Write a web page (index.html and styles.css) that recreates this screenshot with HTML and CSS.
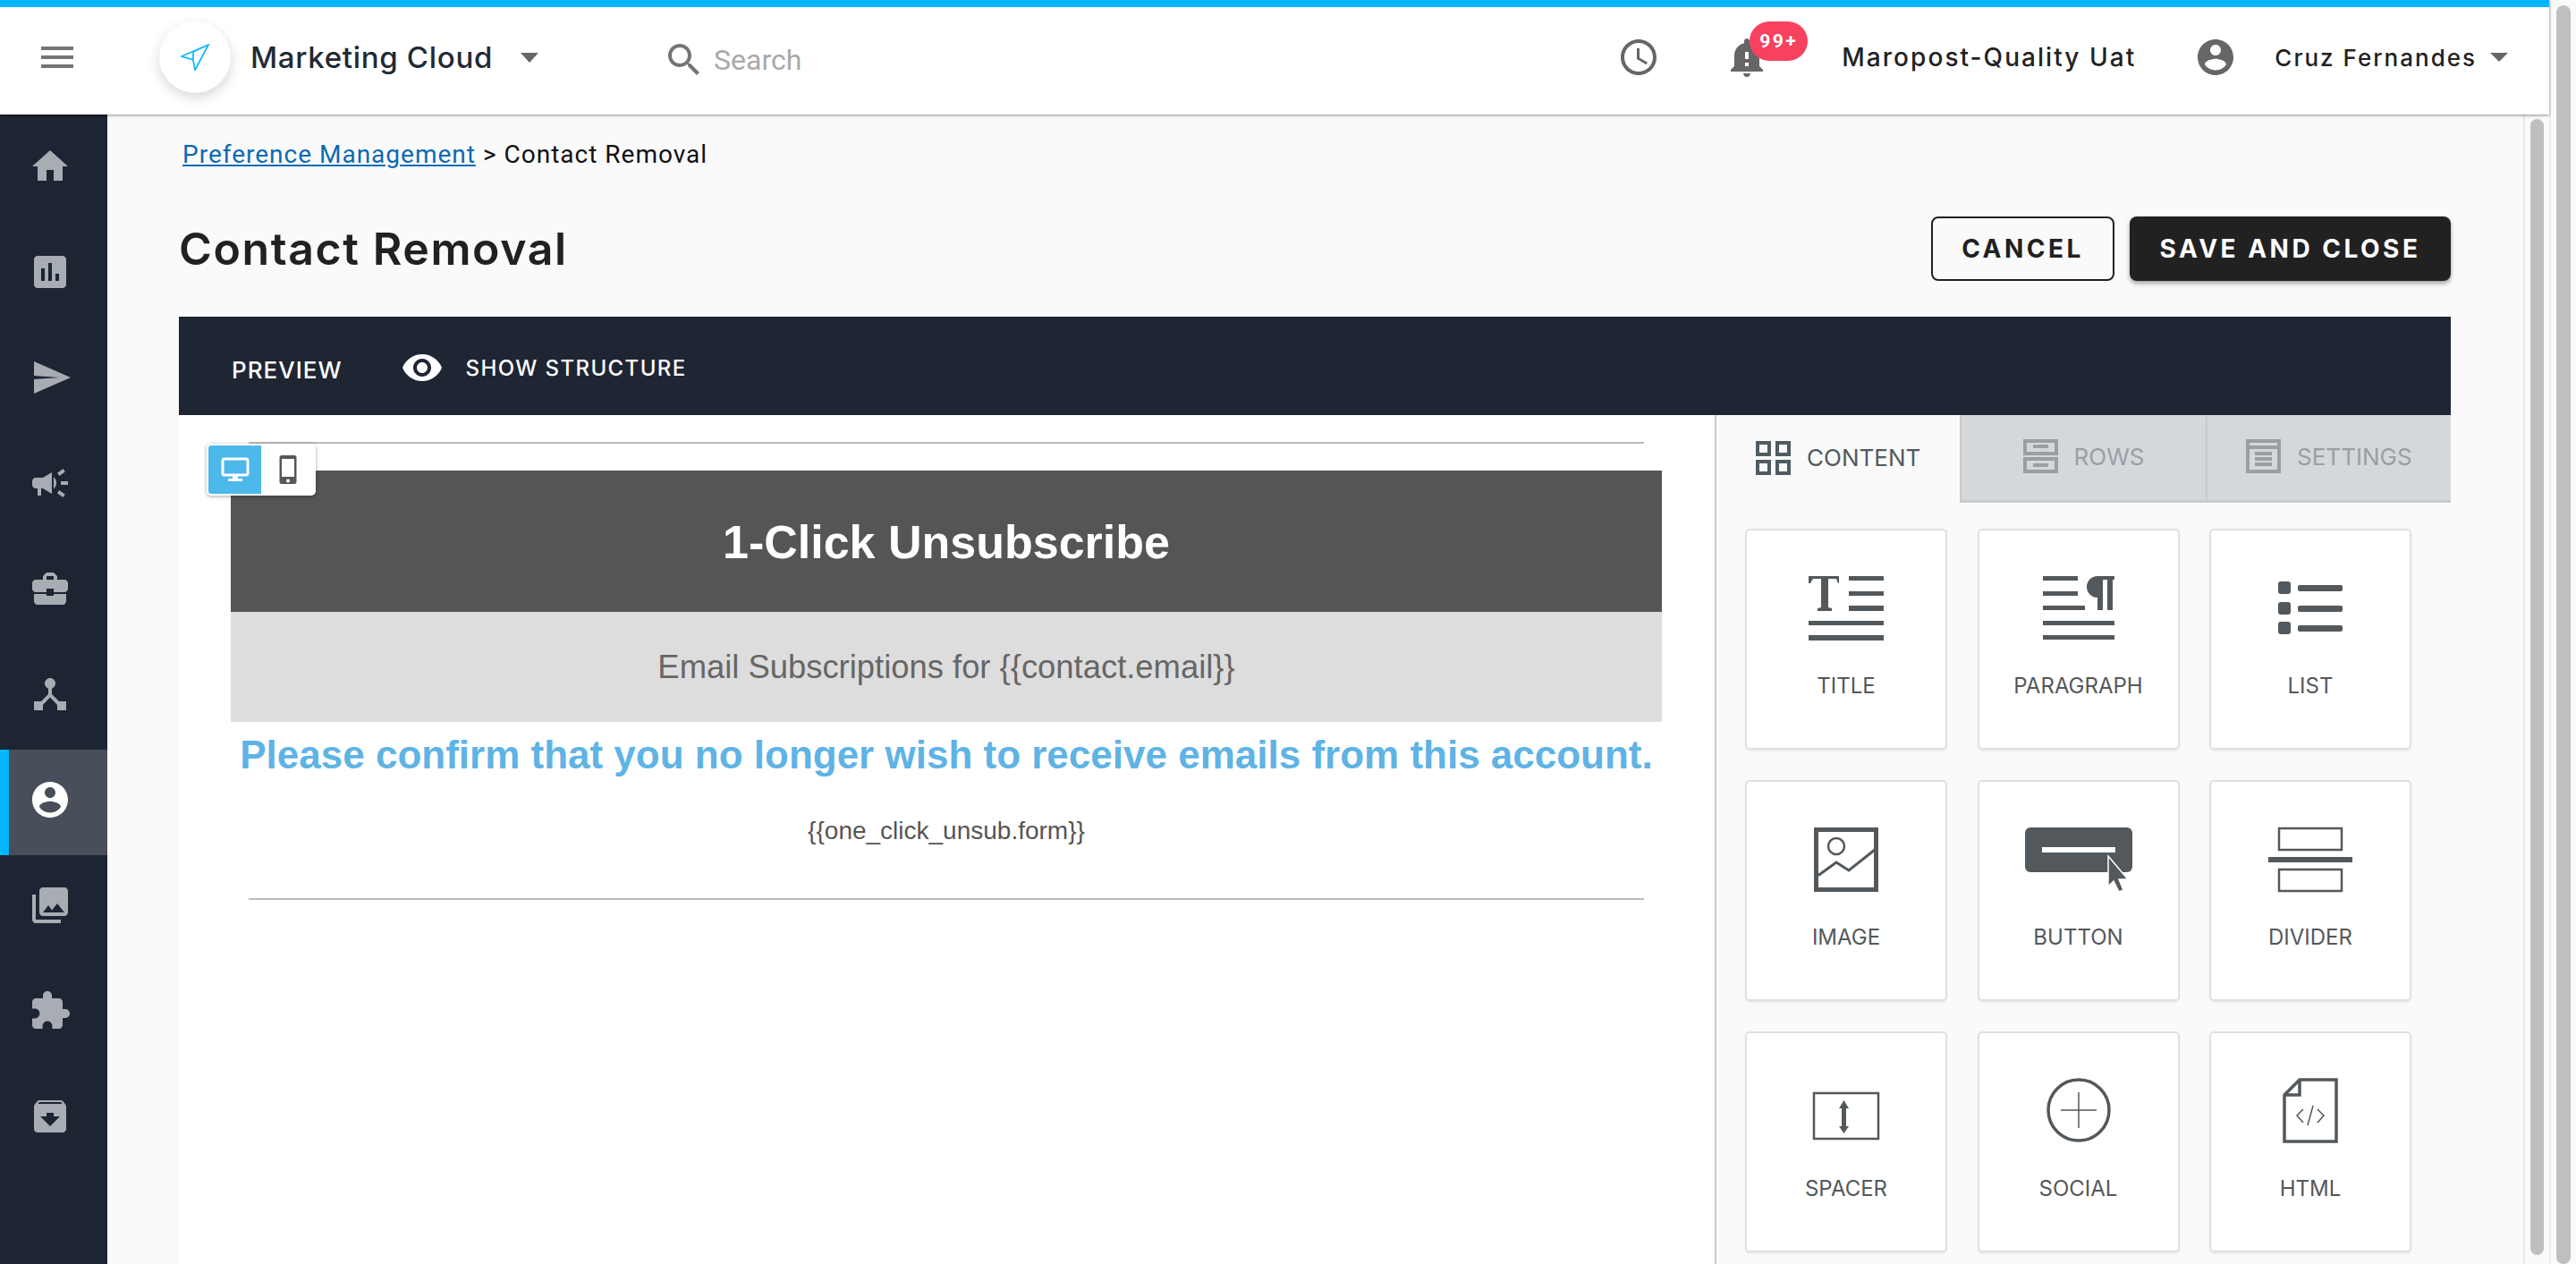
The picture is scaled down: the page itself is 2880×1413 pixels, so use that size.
FILE: index.html
```html
<!DOCTYPE html>
<html lang="en">
<head>
    <meta charset="UTF-8">
    <meta name="viewport" content="width=device-width, initial-scale=1.0">
    <title>Contact Removal</title>
    <link rel="stylesheet" href="styles.css">
</head>
<body>
<div class="app">
    <div class="main">
        <header class="topbar">
            <svg class="menu-icon" viewBox="0 0 24 24"><path d="M3 18h18v-2H3v2zm0-5h18v-2H3v2zm0-7v2h18V6H3z"/></svg>
            <div class="logo">
                <svg viewBox="0 0 32 30"><path d="M31 1 1 14l13 4 2 11.500zM31 1 14 9v9"/></svg>
            </div>
            <span class="brand">Marketing Cloud</span>
            <span class="caret brand-caret"></span>
            <svg class="search-icon" viewBox="0 0 24 24"><path d="M15.5 14h-.79l-.28-.27C15.41 12.59 16 11.11 16 9.5 16 5.91 13.09 3 9.5 3S3 5.91 3 9.5 5.91 16 9.5 16c1.61 0 3.09-.59 4.23-1.57l.27.28v.79l5 4.99L20.49 19l-4.99-5zm-6 0C7.01 14 5 11.99 5 9.5S7.01 5 9.5 5 14 7.01 14 9.5 11.99 14 9.5 14z"/></svg>
            <span class="search-text">Search</span>
            <div class="top-right">
                <svg class="top-icon" viewBox="0 0 24 24"><path d="M11.99 2C6.47 2 2 6.48 2 12s4.47 10 9.99 10C17.52 22 22 17.52 22 12S17.52 2 11.99 2zM12 20c-4.42 0-8-3.58-8-8s3.58-8 8-8 8 3.58 8 8-3.58 8-8 8zm.5-13H11v6l5.25 3.15.75-1.23-4.5-2.67z"/></svg>
                <div class="bell">
                    <svg class="top-icon" viewBox="0 0 24 24"><path d="M12 23c1.1 0 1.99-.89 1.99-1.99h-3.98c0 1.1.89 1.99 1.99 1.99zm7-6v-6c0-3.35-2.36-6.15-5.5-6.83V3c0-.83-.67-1.5-1.5-1.5s-1.5.67-1.5 1.5v1.17C7.36 4.85 5 7.65 5 11v6l-2 2v1h18v-1l-2-2zm-6 .01h-2v-2h2v2zm0-4h-2v-4h2v4z"/></svg>
                    <span class="badge">99+</span>
                </div>
                <span class="account-name">Maropost-Quality Uat</span>
                <svg class="top-icon user-icon" viewBox="0 0 24 24"><path d="M12 2C6.48 2 2 6.48 2 12s4.48 10 10 10 10-4.48 10-10S17.52 2 12 2zm0 3c1.66 0 3 1.34 3 3s-1.34 3-3 3-3-1.34-3-3 1.34-3 3-3zm0 14.2c-2.5 0-4.71-1.28-6-3.22.03-1.99 4-3.08 6-3.08 1.99 0 5.97 1.09 6 3.08-1.29 1.94-3.5 3.22-6 3.22z"/></svg>
                <span class="user-name">Cruz Fernandes</span>
                <span class="caret user-caret"></span>
            </div>
        </header>

        <div class="body">
            <nav class="sidebar">
                <a class="nav-item"><svg viewBox="0 0 24 24"><path d="M10 20v-6h4v6h5v-8h3L12 3 2 12h3v8z"/></svg></a>
                <a class="nav-item"><svg viewBox="0 0 24 24"><path d="M19 3H5c-1.1 0-2 .9-2 2v14c0 1.1.9 2 2 2h14c1.1 0 2-.9 2-2V5c0-1.1-.9-2-2-2zM9 17H7v-7h2v7zm4 0h-2V7h2v10zm4 0h-2v-4h2v4z"/></svg></a>
                <a class="nav-item"><svg viewBox="0 0 24 24"><path d="M3 3l20.5 9L3 21v-8l14-1-14-1z"/></svg></a>
                <a class="nav-item"><svg viewBox="0 0 24 24"><path d="M18 11v2h4v-2h-4zm-2 6.61c.96.71 2.21 1.65 3.2 2.39.4-.53.8-1.07 1.2-1.6-.99-.74-2.24-1.68-3.2-2.4-.4.54-.8 1.08-1.2 1.61zM20.4 5.6c-.4-.53-.8-1.07-1.2-1.6-.99.74-2.24 1.68-3.2 2.4.4.53.8 1.07 1.2 1.6.96-.72 2.21-1.65 3.2-2.4zM4 9c-1.1 0-2 .9-2 2v2c0 1.1.9 2 2 2h1v4h2v-4h1l5 3V6L8 9H4zm11.5 3c0-1.33-.58-2.53-1.5-3.35v6.69c.92-.81 1.5-2.01 1.5-3.34z"/></svg></a>
                <a class="nav-item"><svg viewBox="0 0 24 24"><path d="M10 16v-1H3.01L3 19c0 1.11.89 2 2 2h14c1.11 0 2-.89 2-2v-4h-7v1h-4zm10-9h-4.01V5l-2-2h-4l-2 2v2H4c-1.1 0-2 .9-2 2v3c0 1.11.89 2 2 2h6v-2h4v2h6c1.1 0 2-.9 2-2V9c0-1.1-.9-2-2-2zm-6 0h-4V5h4v2z"/></svg></a>
                <a class="nav-item"><svg viewBox="0 0 24 24"><path d="M17 16l-4-4V8.82C14.16 8.4 15 7.3 15 6c0-1.66-1.34-3-3-3S9 4.34 9 6c0 1.3.84 2.4 2 2.82V12l-4 4H3v5h5v-3.05l4-4.2 4 4.2V21h5v-5h-4z"/></svg></a>
                <a class="nav-item active"><svg viewBox="0 0 24 24"><path d="M12 2C6.48 2 2 6.48 2 12s4.48 10 10 10 10-4.48 10-10S17.52 2 12 2zm0 3c1.66 0 3 1.34 3 3s-1.34 3-3 3-3-1.34-3-3 1.34-3 3-3zm0 14.2c-2.5 0-4.71-1.28-6-3.22.03-1.99 4-3.08 6-3.08 1.99 0 5.97 1.09 6 3.08-1.29 1.94-3.5 3.22-6 3.22z"/></svg></a>
                <a class="nav-item"><svg viewBox="0 0 24 24"><path d="M22 16V4c0-1.1-.9-2-2-2H8c-1.1 0-2 .9-2 2v12c0 1.1.9 2 2 2h12c1.1 0 2-.9 2-2zm-11-4l2.03 2.71L16 11l4 5H8l3-4zM2 6v14c0 1.1.9 2 2 2h14v-2H4V6H2z"/></svg></a>
                <a class="nav-item"><svg viewBox="0 0 24 24"><path d="M20.5 11H19V7c0-1.1-.9-2-2-2h-4V3.5C13 2.12 11.88 1 10.5 1S8 2.12 8 3.5V5H4c-1.1 0-1.99.9-1.99 2v3.8H3.5c1.49 0 2.7 1.21 2.7 2.7s-1.21 2.7-2.7 2.7H2V20c0 1.1.9 2 2 2h3.8v-1.5c0-1.49 1.21-2.7 2.7-2.7 1.49 0 2.7 1.21 2.7 2.7V22H17c1.1 0 2-.9 2-2v-4h1.5c1.38 0 2.5-1.12 2.5-2.5S21.88 11 20.5 11z"/></svg></a>
                <a class="nav-item"><svg viewBox="0 0 24 24"><path d="M20.54 5.23l-1.39-1.68C18.88 3.21 18.47 3 18 3H6c-.47 0-.88.21-1.16.55L3.46 5.23C3.17 5.57 3 6.02 3 6.5V19c0 1.1.9 2 2 2h14c1.1 0 2-.9 2-2V6.5c0-.48-.17-.93-.46-1.27zM12 17.5L6.5 12H10v-2h4v2h3.5L12 17.5zM5.12 5l.81-1h12l.94 1H5.12z"/></svg></a>
            </nav>

            <main class="content">
                <div class="breadcrumb"><a href="#">Preference Management</a> &gt; Contact Removal</div>
                <div class="page-head">
                    <h1>Contact Removal</h1>
                    <div class="actions">
                        <button class="btn btn-cancel">CANCEL</button>
                        <button class="btn btn-save">SAVE AND CLOSE</button>
                    </div>
                </div>

                <div class="toolbar">
                    <span class="preview">PREVIEW</span>
                    <svg class="eye" viewBox="0 0 24 24"><path d="M12 4.500C7 4.500 2.730 7.610 1 12c1.730 4.390 6 7.500 11 7.500s9.270-3.110 11-7.500c-1.730-4.390-6-7.500-11-7.500zM12 17c-2.760 0-5-2.240-5-5s2.240-5 5-5 5 2.240 5 5-2.240 5-5 5zm0-8c-1.660 0-3 1.340-3 3s1.340 3 3 3 3-1.340 3-3-1.340-3-3-3z"/></svg>
                    <span class="structure">SHOW STRUCTURE</span>
                </div>

                <div class="editor">
                    <section class="canvas">
                        <div class="device-toggle">
                            <span class="device on">
                                <svg viewBox="0 0 32 28"><rect class="screen" x="2" y="2" width="28" height="18" rx="2"/><rect x="13" y="21" width="6" height="3"/><rect x="8" y="24" width="16" height="3"/></svg>
                            </span>
                            <span class="device">
                                <svg viewBox="0 0 20 32"><path d="M3 0h14a2.500 2.500 0 0 1 2.500 2.500v27a2.500 2.500 0 0 1-2.500 2.500H3a2.500 2.500 0 0 1-2.500-2.500v-27A2.500 2.500 0 0 1 3 0zm0 4v20h14V4zm7 22.500a2 2 0 1 0 0 4 2 2 0 0 0 0-4z" fill-rule="evenodd"/></svg>
                            </span>
                        </div>
                        <div class="email">
                            <hr class="rule rule-top">
                            <div class="email-title">1-Click Unsubscribe</div>
                            <div class="email-sub">Email Subscriptions for {{contact.email}}</div>
                            <div class="email-confirm">Please confirm that you no longer wish to receive emails from this account.</div>
                            <div class="email-form">{{one_click_unsub.form}}</div>
                            <hr class="rule rule-bottom">
                        </div>
                    </section>

                    <aside class="panel">
                        <div class="tabs">
                            <div class="tab current">
                                <svg viewBox="0 0 39 38"><path d="M2 2h13v13H2zM24 2h13v13H24zM2 23h13v13H2zM24 23h13v13H24z"/></svg>
                                <span>CONTENT</span>
                            </div>
                            <div class="tab">
                                <svg viewBox="0 0 39 38"><path d="M2 2h35v14H2zM2 22h35v14H2zM11 8h17M11 29h17"/></svg>
                                <span>ROWS</span>
                            </div>
                            <div class="tab">
                                <svg viewBox="0 0 39 38"><path d="M2 2h35v34H2zM2 9h35M10 16h19M10 22h19M10 28h19"/></svg>
                                <span>SETTINGS</span>
                            </div>
                        </div>

                        <div class="blocks">
                            <div class="block">
                                <svg viewBox="0 0 120 72"><path d="M18 0h34v8h-1l-2-5h-9v32l4 1v3H28v-3l4-1V3h-9l-3 5h-2zM63 0h39v5H63zM63 17h39v5H63zM63 33h39v6H63zM18 50h84v5H18zM18 66h84v6H18z"/></svg>
                                <span>TITLE</span>
                            </div>
                            <div class="block">
                                <svg viewBox="0 0 120 72"><path d="M20 0h39v5H20zM20 17h39v5H20zM20 33h47v5H20zM20 50h80v5H20zM20 66h80v5H20zM100 0v4h-2v34h-6V4h-5v34h-6V24a12 12 0 0 1 0-24z"/></svg>
                                <span>PARAGRAPH</span>
                            </div>
                            <div class="block">
                                <svg viewBox="0 0 120 72"><rect x="24" y="6" width="14" height="14" rx="3"/><rect x="24" y="29" width="14" height="14" rx="3"/><rect x="24" y="51" width="14" height="14" rx="3"/><rect x="46" y="10" width="50" height="7" rx="2"/><rect x="46" y="33" width="50" height="7" rx="2"/><rect x="46" y="55" width="50" height="7" rx="2"/></svg>
                                <span>LIST</span>
                            </div>
                            <div class="block">
                                <svg class="line" viewBox="0 0 120 72"><rect x="26.500" y="2.500" width="67" height="67" stroke-width="5"/><circle cx="49" cy="21" r="9" stroke-width="2.500"/><path d="M29 53.500 49 39l14 9 29-23" stroke-width="3"/></svg>
                                <span>IMAGE</span>
                            </div>
                            <div class="block">
                                <svg viewBox="0 0 120 72"><rect width="120" height="50" rx="6"/><rect x="19" y="22" width="82" height="6" fill="#fff"/><path d="M93 32l22 26h-10l5 12-5 2-6-12-6 6z" stroke="#fff" stroke-width="1.500"/></svg>
                                <span>BUTTON</span>
                            </div>
                            <div class="block">
                                <svg class="line" viewBox="0 0 120 72"><rect x="25" y="1" width="70" height="24" stroke-width="2.500"/><rect x="25" y="47" width="70" height="24" stroke-width="2.500"/><path d="M13 36h94" stroke-width="6"/></svg>
                                <span>DIVIDER</span>
                            </div>
                            <div class="block">
                                <svg viewBox="0 0 120 72"><rect class="outline" x="24" y="16" width="72" height="51" stroke-width="2.500"/><path d="M55 33v20h-3l5.500 8 5.500-8h-3V33h3l-5.500-9-5.500 9z"/></svg>
                                <span>SPACER</span>
                            </div>
                            <div class="block">
                                <svg class="line" viewBox="0 0 120 72"><circle cx="60" cy="35" r="34" stroke-width="3.500"/><path d="M40 35h40M60 15v40" stroke-width="1.500"/></svg>
                                <span>SOCIAL</span>
                            </div>
                            <div class="block">
                                <svg class="line" viewBox="0 0 120 72"><path d="M48 1h41v69H31V18zM48 1v17H31" stroke-width="3.500"/><path d="M52 34l-7 7 7 8M68 34l7 7-7 8M63 30l-6 22" stroke-width="1.500"/></svg>
                                <span>HTML</span>
                            </div>
                        </div>
                    </aside>
                </div>
            </main>

            <div class="scroll scroll-inner"><div class="thumb"></div></div>
        </div>
    </div>
    <div class="scroll scroll-outer"><div class="thumb"></div></div>
</div>
</body>
</html>
```

FILE: styles.css
```css
* {
    box-sizing: border-box;
}

html, body {
    margin: 0;
    height: 100%;
    overflow: hidden;
}

body {
    font-family: Inter, "Liberation Sans", sans-serif;
    background: #fafafa;
    color: #212121;
}

.app {
    display: flex;
    height: 1413px;
}

.main {
    width: 2850px;
    display: flex;
    flex-direction: column;
}

/* top bar */
.topbar {
    height: 128px;
    flex: none;
    display: flex;
    align-items: center;
    padding: 0 46px 8px 40px;
    background: #fff;
    border-top: 8px solid #00b6ff;
    box-shadow: 0 1px 3px rgba(0,0,0,0.45);
    position: relative;
    z-index: 2;
}

.topbar svg {
    flex: none;
    fill: #757575;
}

.menu-icon {
    width: 48px;
    height: 48px;
}

.logo {
    width: 80px;
    height: 80px;
    margin-left: 90px;
    border-radius: 50%;
    background: #fff;
    box-shadow: 0 5px 14px rgba(0,0,0,0.16);
    display: flex;
    align-items: center;
    justify-content: center;
}

.topbar .logo svg {
    width: 32px;
    height: 30px;
    fill: none;
    stroke: #14b8ff;
    stroke-width: 1.8;
}

.brand {
    margin-left: 22px;
    font-size: 33px;
    font-weight: 500;
    letter-spacing: 0.7px;
    color: #222a35;
}

.caret {
    width: 0;
    height: 0;
    border-style: solid;
    border-color: #666 transparent transparent;
}

.brand-caret {
    margin-left: 31px;
    border-width: 11px 10px 0;
}

.search-icon {
    width: 48px;
    height: 48px;
    margin-left: 139px;
    margin-top: 6px;
}

.search-text {
    margin-left: 9px;
    margin-top: 6px;
    font-family: Roboto, sans-serif;
    font-size: 32px;
    color: #a9a9a9;
}

.top-right {
    margin-left: auto;
    display: flex;
    align-items: center;
}

.top-icon {
    width: 48px;
    height: 48px;
}

.topbar .top-icon {
    fill: #666;
}

.bell {
    position: relative;
    height: 48px;
    margin-left: 73px;
}

.badge {
    position: absolute;
    left: 27px;
    top: -16px;
    width: 65px;
    height: 44px;
    border-radius: 22px;
    background: #f7415f;
    color: #fff;
    font-family: Roboto, sans-serif;
    font-size: 21px;
    font-weight: 700;
    letter-spacing: 2.5px;
    text-align: center;
    line-height: 44px;
}

.account-name {
    margin-left: 82px;
    font-size: 28px;
    font-weight: 500;
    letter-spacing: 2.05px;
    color: #222;
}

.user-icon {
    margin-left: 65px;
}

.user-name {
    margin-left: 42px;
    font-size: 26px;
    font-weight: 500;
    letter-spacing: 2px;
    color: #222;
}

.user-caret {
    margin-left: 15px;
    border-width: 10px 10px 0;
}

/* sidebar */
.body {
    flex: 1;
    display: flex;
    min-height: 0;
}

.sidebar {
    width: 120px;
    flex: none;
    background: #1e2532;
    padding-top: 2px;
}

.nav-item {
    display: flex;
    align-items: center;
    justify-content: center;
    height: 118px;
    padding: 0 8px 6px 0;
}

.nav-item svg {
    width: 48px;
    height: 48px;
    fill: #a8acb3;
}

.nav-item.active {
    background: #484f5a;
    border-left: 10px solid #00b6ff;
    padding-right: 18px;
}

.nav-item.active svg {
    fill: #fff;
}

/* content */
.content {
    flex: 1;
    min-width: 0;
    overflow: hidden;
    padding: 0 81px 0 80px;
    display: flex;
    flex-direction: column;
}

.breadcrumb {
    margin-top: 27px;
    padding-left: 4px;
    height: 36px;
    font-family: Roboto, sans-serif;
    font-size: 28px;
    line-height: 36px;
    letter-spacing: 1px;
    color: #111;
}

.breadcrumb a {
    color: #0a6ab5;
}

.page-head {
    display: flex;
    align-items: center;
    justify-content: space-between;
    margin-top: 51px;
    height: 72px;
}

h1 {
    margin: 0;
    font-size: 50px;
    font-weight: 600;
    letter-spacing: 1.6px;
    color: #212121;
}

.actions {
    display: flex;
    gap: 17px;
}

.btn {
    height: 72px;
    border-radius: 8px;
    font-family: Inter, sans-serif;
    font-size: 28px;
    font-weight: 700;
    letter-spacing: 3.5px;
}

.btn-cancel {
    width: 205px;
    background: #fafafa;
    border: 2px solid #212121;
    color: #212121;
}

.btn-save {
    width: 359px;
    background: #212121;
    border: none;
    color: #fff;
    box-shadow: 0 3px 5px rgba(0,0,0,0.35);
}

.toolbar {
    flex: none;
    height: 110px;
    margin-top: 40px;
    padding: 4px 0 0 59px;
    background: #1e2533;
    color: #fff;
    display: flex;
    align-items: center;
    font-size: 24px;
    font-weight: 500;
    letter-spacing: 1.4px;
}

.preview {
    margin-top: 4px;
    font-size: 26px;
    letter-spacing: 1px;
}

.eye {
    width: 48px;
    height: 48px;
    margin-left: 66px;
    fill: #fff;
}

.structure {
    margin-left: 24px;
}

/* editor */
.editor {
    flex: 1;
    display: flex;
    min-height: 0;
}

.canvas {
    width: 1717px;
    flex: none;
    position: relative;
    background: #fff;
    padding: 30px 59px 0 58px;
}

.device-toggle {
    position: absolute;
    left: 31px;
    top: 32px;
    width: 122px;
    height: 58px;
    padding: 2px;
    display: flex;
    background: #fff;
    border-radius: 5px;
    box-shadow: 0 1px 4px rgba(0,0,0,0.35);
    z-index: 1;
}

.device {
    flex: 1;
    display: flex;
    align-items: center;
    justify-content: center;
}

.device.on {
    background: #4db8ea;
    border-radius: 3px 0 0 3px;
}

.device svg {
    width: 20px;
    height: 32px;
    fill: #53585c;
}

.device.on svg {
    width: 32px;
    height: 28px;
    fill: #fff;
}

.device.on .screen {
    fill: #4db8ea;
    stroke: #fff;
    stroke-width: 3;
}

.rule {
    margin: 0 20px;
    height: 2px;
    border: none;
    background: #bbb;
}

.email-title {
    margin-top: 30px;
    height: 158px;
    background: #555;
    color: #fff;
    font-family: "Liberation Sans", sans-serif;
    font-size: 52px;
    font-weight: 700;
    line-height: 160px;
    text-align: center;
}

.email-sub {
    height: 123px;
    background: #ddd;
    color: #666;
    font-family: "Liberation Sans", sans-serif;
    font-size: 36.4px;
    line-height: 123px;
    text-align: center;
}

.email-confirm {
    margin-top: 11px;
    color: #5fb3e5;
    font-family: "Liberation Sans", sans-serif;
    font-size: 44px;
    font-weight: 700;
    line-height: 52px;
    text-align: center;
    white-space: nowrap;
}

.email-form {
    margin-top: 41px;
    color: #555;
    font-family: "Liberation Sans", sans-serif;
    font-size: 28px;
    line-height: 36px;
    text-align: center;
}

.rule-bottom {
    margin-top: 57px;
}

/* right panel */
.panel {
    flex: 1;
    min-width: 0;
    background: #fafafa;
    border-left: 2px solid #ccc;
}

.tabs {
    display: flex;
    height: 98px;
}

.tab {
    flex: 1;
    display: flex;
    align-items: center;
    justify-content: center;
    gap: 18px;
    padding-bottom: 3px;
    background: #d5d8db;
    border-bottom: 3px solid #c8cbce;
    border-left: 2px solid #c8cbce;
    color: #9a9fa3;
    font-size: 26px;
}

.tab svg {
    width: 39px;
    height: 38px;
    fill: none;
    stroke: #9a9fa3;
    stroke-width: 4;
}

.tab.current {
    background: #fafafa;
    border: none;
    color: #505a60;
}

.tab.current svg {
    stroke: #4f5c62;
}

.blocks {
    display: grid;
    grid-template-columns: repeat(3, 226px);
    gap: 34px 33.5px;
    padding: 29px 0 0 32px;
}

.block {
    height: 247px;
    background: #fff;
    border: 2px solid #e0e0e0;
    border-radius: 5px;
    box-shadow: 0 2px 2px rgba(0,0,0,0.06);
    padding-top: 51px;
    display: flex;
    flex-direction: column;
    align-items: center;
    color: #53585c;
    font-size: 24px;
}

.block svg {
    width: 120px;
    height: 72px;
    fill: #53585c;
    margin-bottom: 36px;
    overflow: visible;
}

.block svg.line {
    fill: none;
    stroke: #53585c;
}

.block svg .outline {
    fill: none;
    stroke: #53585c;
}

/* scrollbars */
.scroll {
    flex: none;
    background: #fff;
}

.thumb {
    background: #bfbfbf;
    border-radius: 8px;
}

.scroll-inner {
    width: 29px;
    border-left: 2px solid #e8e8e8;
    background: #fafafa;
    padding: 5px 6px 10px 6px;
}

.scroll-inner .thumb {
    height: 100%;
}

.scroll-outer {
    width: 30px;
    padding: 6px 6px 0 6px;
    border-left: 2px solid #ececec;
    background: #fafafa;
}

.scroll-outer .thumb {
    height: 100%;
}
```
